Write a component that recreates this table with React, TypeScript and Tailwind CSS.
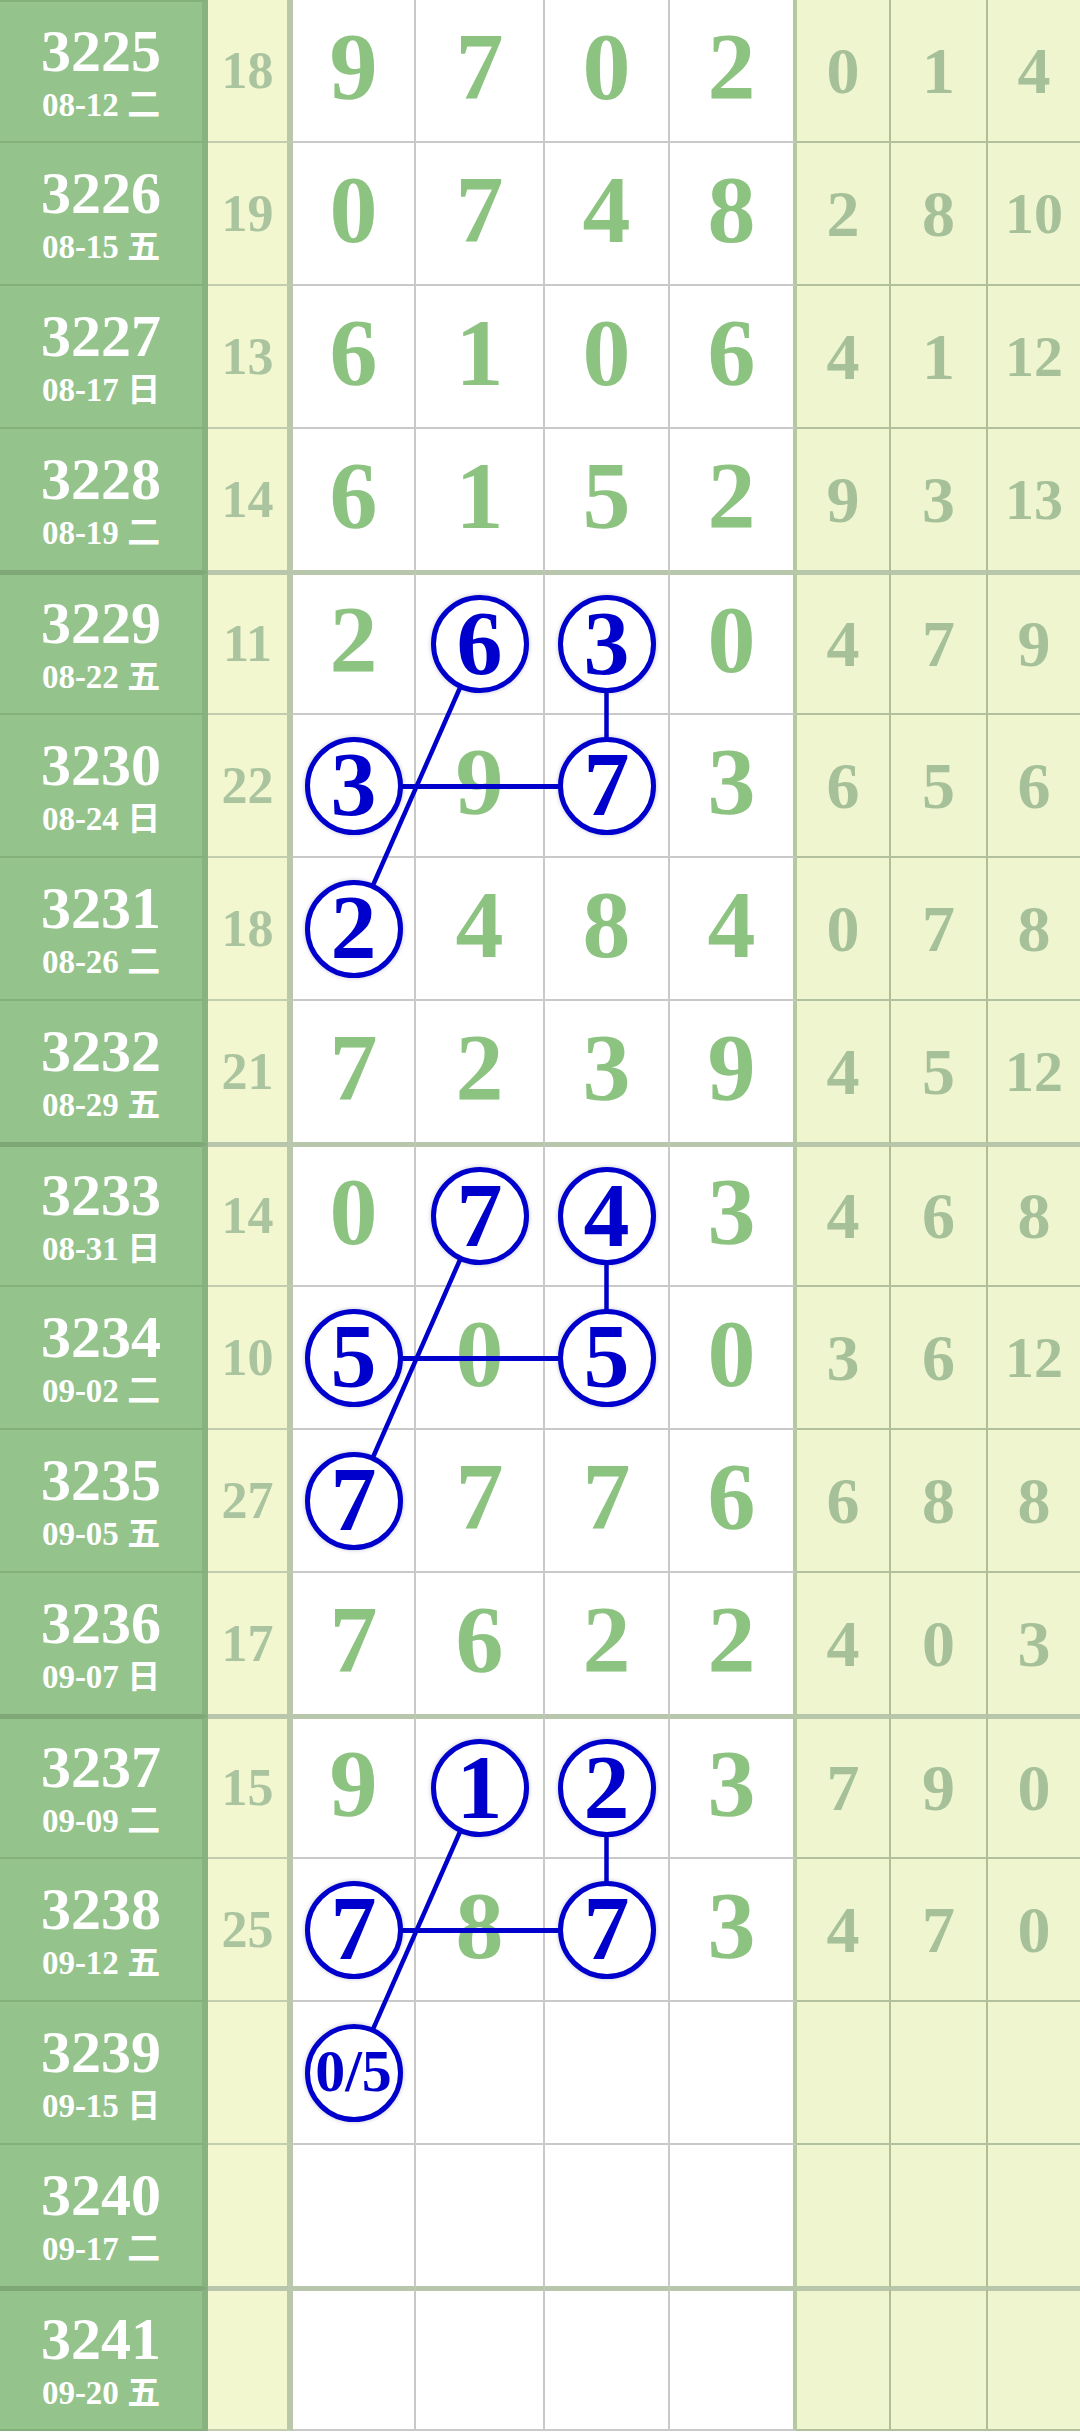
import React from "react";

type Row = {
  no: string;
  date: string;
  wd: string;
  sum: string;
  d: string[];
  r: string[];
};

const rows: Row[] = [
  { no: "3225", date: "08-12", wd: "二", sum: "18", d: ["9", "7", "0", "2"], r: ["0", "1", "4"] },
  { no: "3226", date: "08-15", wd: "五", sum: "19", d: ["0", "7", "4", "8"], r: ["2", "8", "10"] },
  { no: "3227", date: "08-17", wd: "日", sum: "13", d: ["6", "1", "0", "6"], r: ["4", "1", "12"] },
  { no: "3228", date: "08-19", wd: "二", sum: "14", d: ["6", "1", "5", "2"], r: ["9", "3", "13"] },
  { no: "3229", date: "08-22", wd: "五", sum: "11", d: ["2", "6", "3", "0"], r: ["4", "7", "9"] },
  { no: "3230", date: "08-24", wd: "日", sum: "22", d: ["3", "9", "7", "3"], r: ["6", "5", "6"] },
  { no: "3231", date: "08-26", wd: "二", sum: "18", d: ["2", "4", "8", "4"], r: ["0", "7", "8"] },
  { no: "3232", date: "08-29", wd: "五", sum: "21", d: ["7", "2", "3", "9"], r: ["4", "5", "12"] },
  { no: "3233", date: "08-31", wd: "日", sum: "14", d: ["0", "7", "4", "3"], r: ["4", "6", "8"] },
  { no: "3234", date: "09-02", wd: "二", sum: "10", d: ["5", "0", "5", "0"], r: ["3", "6", "12"] },
  { no: "3235", date: "09-05", wd: "五", sum: "27", d: ["7", "7", "7", "6"], r: ["6", "8", "8"] },
  { no: "3236", date: "09-07", wd: "日", sum: "17", d: ["7", "6", "2", "2"], r: ["4", "0", "3"] },
  { no: "3237", date: "09-09", wd: "二", sum: "15", d: ["9", "1", "2", "3"], r: ["7", "9", "0"] },
  { no: "3238", date: "09-12", wd: "五", sum: "25", d: ["7", "8", "7", "3"], r: ["4", "7", "0"] },
  { no: "3239", date: "09-15", wd: "日", sum: "", d: ["", "", "", ""], r: ["", "", ""] },
  { no: "3240", date: "09-17", wd: "二", sum: "", d: ["", "", "", ""], r: ["", "", ""] },
  { no: "3241", date: "09-20", wd: "五", sum: "", d: ["", "", "", ""], r: ["", "", ""] },
];

// circled picks: "row-col" -> label
const marks: Record<string, string> = {
  "4-1": "6", "4-2": "3", "5-0": "3", "5-2": "7", "6-0": "2",
  "8-1": "7", "8-2": "4", "9-0": "5", "9-2": "5", "10-0": "7",
  "12-1": "1", "12-2": "2", "13-0": "7", "13-2": "7", "14-0": "0/5",
};

const ROW_H = 143;
const colX = [353.5, 479.5, 606.5];
const cy = (r: number) => r * ROW_H + 71.5;

const groups = [4, 8, 12];

const Row = ({ row, i }: { row: Row; i: number }) => {
  const last = i % 4 === 3;
  const first = i % 4 === 0 && i > 0;

  const greenB = last ? "border-b-[#7fa877]" : "border-b-[#84b07c]";
  const yellowB = last ? "border-b-[#b8c6ac]" : "border-b-[#c2cdb0]";
  const whiteB = last ? "border-b-[#b8c6ac]" : "border-b-[#c9c9c9]";
  const rightB = last ? "border-b-[#b8c6ac]" : "border-b-[#b3c09e]";
  const topG = first ? "border-t-[3px] border-t-[#7fa877]" : i === 0 ? "border-t-2 border-t-[#84b07c]" : "";
  const top = first ? "border-t-[3px] border-t-[#b8c6ac]" : "";

  return (
    <div className="grid h-[143px] grid-cols-[208px_85px_123px_129px_125px_127px_94px_97px_92px]">
      <div
        className={`flex flex-col items-center justify-center border-b-2 border-r-[6px] border-r-[#88b280] bg-[#94c48c] text-white ${greenB} ${topG}`}
      >
        <span className="text-[60px] font-bold leading-[60px]">{row.no}</span>
        <span className="mt-[6px] text-[33px] font-bold leading-[36px]">
          {row.date} {row.wd}
        </span>
      </div>

      <div
        className={`flex items-center justify-center border-b-2 border-r-[6px] border-r-[#b9c7aa] bg-[#f2f7cf] text-[52px] font-bold leading-none text-[#abc4a0] ${yellowB} ${top}`}
      >
        {row.sum}
      </div>

      {row.d.map((v, c) => {
        const m = marks[`${i}-${c}`];
        const edge = c === 3 ? "border-r-4 border-r-[#b5c99f]" : "border-r-2 border-r-[#c9c9c9]";
        return (
          <div
            key={c}
            className={`relative flex items-center justify-center border-b-2 bg-white pb-2 text-[96px] font-bold leading-none text-[#8dc381] ${edge} ${whiteB} ${top}`}
          >
            {m ? (
              <div
                className={`absolute left-1/2 top-1/2 z-20 flex h-[98px] w-[98px] -translate-x-1/2 -translate-y-1/2 items-center justify-center rounded-full border-[5px] border-[#0000cd] bg-white pb-[3px] font-bold leading-none text-[#0000cd] shadow-[0_0_4px_rgba(0,0,80,0.25)] ${
                  m.length > 1 ? "text-[60px]" : "text-[92px]"
                }`}
              >
                {m}
              </div>
            ) : (
              v
            )}
          </div>
        );
      })}

      {row.r.map((v, c) => (
        <div
          key={c}
          className={`flex items-center justify-center border-b-2 bg-[#eff6cf] font-bold leading-none text-[#a6c09a] ${
            c < 2 ? "border-r-2 border-r-[#b0be98]" : ""
          } ${v.length > 1 ? "text-[58px]" : "text-[66px]"} ${rightB} ${top}`}
        >
          {v}
        </div>
      ))}
    </div>
  );
};

export default function App() {
  return (
    <div className="relative w-[1080px] bg-white font-['Liberation_Serif','Noto_Sans_CJK_SC',serif]">
      {rows.map((row, i) => (
        <Row key={row.no} row={row} i={i} />
      ))}

      <svg
        className="pointer-events-none absolute left-0 top-0 z-10"
        width={1080}
        height={rows.length * ROW_H}
      >
        {groups.map((g) => (
          <g key={g} stroke="#0000cd" strokeWidth={4.5}>
            <line x1={colX[1]} y1={cy(g)} x2={colX[0]} y2={cy(g + 2)} />
            <line x1={colX[0]} y1={cy(g + 1)} x2={colX[2]} y2={cy(g + 1)} strokeWidth={5} />
            <line x1={colX[2]} y1={cy(g)} x2={colX[2]} y2={cy(g + 1)} />
          </g>
        ))}
      </svg>
    </div>
  );
}
